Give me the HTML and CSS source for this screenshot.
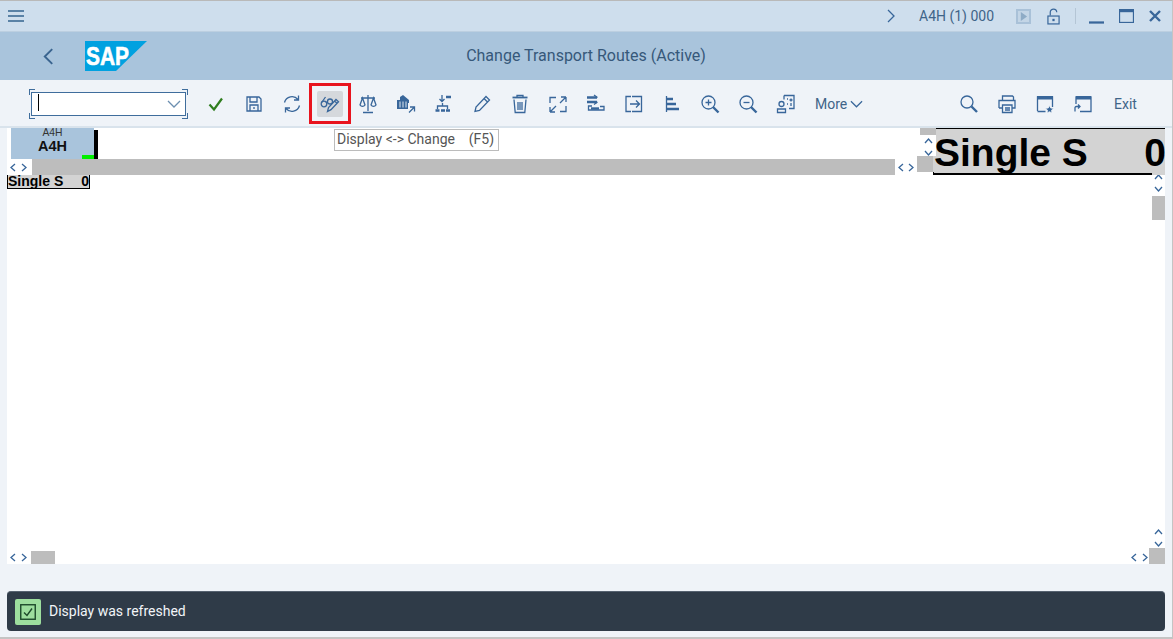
FILE: index.html
```html
<!DOCTYPE html>
<html lang="en">
<head>
<meta charset="utf-8">
<title>Change Transport Routes (Active)</title>
<link rel="stylesheet" href="styles.css">
</head>
<body>
<div class="shell">
  <header class="sysbar">
    <svg class="ico menu" viewBox="0 0 16 12"><path d="M0 1h16M0 6h16M0 11h16"/></svg>
    <div class="sys-right">
      <svg class="ico sys-chev" viewBox="0 0 8 14"><path d="M1 1l6 6-6 6"/></svg>
      <span class="sys-text">A4H (1) 000</span>
      <span class="play"><svg viewBox="0 0 10 10"><path d="M2 0l7 5-7 5z"/></svg></span>
      <svg class="ico lock" viewBox="0 0 14 18"><path d="M3.500 8V4.500a3.500 3.500 0 0 1 7 0"/><rect x="1" y="8.500" width="12" height="8.500"/><path class="fat" d="M7 11.500v2.500"/></svg>
      <span class="sep"></span>
      <svg class="ico win-min" viewBox="0 0 16 3"><path class="fat" d="M0 1.500h16"/></svg>
      <svg class="ico win-max" viewBox="0 0 15 14"><rect x=".5" y=".5" width="14" height="13"/><path class="fat" d="M0 2h15"/></svg>
      <svg class="ico win-close" viewBox="0 0 12 12"><path class="fat" d="M1 1l10 10M11 1L1 11"/></svg>
    </div>
  </header>

  <div class="titlebar">
    <svg class="ico back" viewBox="0 0 10 16"><path class="semi" d="M8.500 1L1.500 8l7 7"/></svg>
    <svg class="logo" viewBox="0 0 62 30"><path class="logo-bg" d="M0 0h62L31 30H0z"/><text class="logo-text" x="1" y="24" textLength="43" lengthAdjust="spacingAndGlyphs">SAP</text></svg>
    <h1 class="title">Change Transport Routes (Active)</h1>
  </div>

  <div class="toolbar">
    <div class="cmd">
      <span class="caret"></span>
      <svg class="ico cmd-chev" viewBox="0 0 14 8"><path d="M1 1l6 6 6-6"/></svg>
    </div>
    <div class="tools">
      <span class="tool"><svg viewBox="0 0 20 20"><path class="check" d="M3.500 10.500l4.500 5L16 4.500"/></svg></span>
      <span class="tool"><svg class="ico" viewBox="0 0 20 20"><path d="M3 3h12l2 2v12H3z"/><path d="M6 3v5h7V3M6 17v-6h8v6M10 13v2"/></svg></span>
      <span class="tool"><svg class="ico" viewBox="0 0 20 20"><path d="M2.500 8.500A7.800 7.800 0 0 1 16 5.500M17.500 11.500A7.800 7.800 0 0 1 4 14.500M16.500 1.500v4.500h-4.500M3.500 18.500v-4.500h4.500"/></svg></span>
      <span class="tool tool-active"><svg class="ico" viewBox="0 0 20 20"><circle cx="4" cy="10" r="2.800"/><circle cx="10" cy="7.500" r="2.500"/><path d="M2 8l3.500-5M6.600 9l1-.6M7.500 17.500l1-4 7.500-8 2.500 2.200-7.500 8zM14.500 7l2.500 2.200"/></svg></span>
      <span class="tool"><svg class="ico" viewBox="0 0 20 20"><path d="M10 1v16M5 18.500h10M3 4h14M4.500 4L2 11a3 3 0 0 0 5 0L4.500 4zM15.500 4L13 11a3 3 0 0 0 5 0l-2.500-7z"/></svg></span>
      <span class="tool"><svg class="ico" viewBox="0 0 20 20"><path class="block" d="M7 1l6 5v3h-1v6H1V6h3V3z"/><path class="lite" d="M4 7.500v6M7 7.500v6M10 7.500v6"/><path d="M13 18.500l5.500-5.500M14 13h4.500v4.500"/></svg></span>
      <span class="tool"><svg class="ico" viewBox="0 0 20 20"><path d="M8 1v6M5.500 5l2.500 2.500L10.500 5M8.500 9v3M3.500 15v-3h10v3"/><path class="fat" d="M12 3h5M1.500 16.500h4M7 16.500h4M12 16.500h4"/></svg></span>
      <span class="tool"><svg class="ico" viewBox="0 0 20 20"><path d="M3 17.500l1-4.500L14 2.500 17.500 6l-10 10.500zM12 4.500L15.500 8"/></svg></span>
      <span class="tool"><svg class="ico" viewBox="0 0 20 20"><path class="semi" d="M2.500 3.500h15"/><path d="M7 3.500V1.500h6v2M4 5.500l1.200 13h9.600L16 5.500M8 8v8M10 8v8M12 8v8"/></svg></span>
      <span class="tool"><svg class="ico" viewBox="0 0 20 20"><path d="M2 9V3.500h6M12 17.500h6V12M18 3h-5M18 3v5M18 3l-6 6M2 18h5M2 18v-5M2 18l6-6"/></svg></span>
      <span class="tool"><svg class="ico" viewBox="0 0 20 20"><path class="fat" d="M1 3.500h10M1 8h10"/><path d="M8 1l3.500 2.500M8 10.500L11.500 8M6 12H2.500v4H18v-3.500h-4"/><path class="fat" d="M5 14.500h8"/></svg></span>
      <span class="tool"><svg class="ico" viewBox="0 0 20 20"><path d="M7 2.500H2v15h5M8 2.500h9.500v15H8M6 10h9M12 6.500l3.500 3.500-3.500 3.500"/></svg></span>
      <span class="tool"><svg class="ico" viewBox="0 0 20 20"><path d="M4.500 2v16"/><path class="fat" d="M5 5h6M5 10h9M5 15h12"/></svg></span>
      <span class="tool"><svg class="ico" viewBox="0 0 20 20"><circle cx="8.500" cy="8.500" r="6.500"/><path d="M8.500 5.500v6M5.500 8.500h6"/><path class="fat" d="M13 13l5.500 5.500"/></svg></span>
      <span class="tool"><svg class="ico" viewBox="0 0 20 20"><circle cx="8.500" cy="8.500" r="6.500"/><path d="M5.500 8.500h6"/><path class="fat" d="M13 13l5.500 5.500"/></svg></span>
      <span class="tool"><svg class="ico" viewBox="0 0 20 20"><path d="M8 1.500h10v13h-5M8 1.500v4M11 5h1M15 4.500v3M13.500 6h3M11 10h1M15 9v3"/><circle cx="5.500" cy="10" r="2.500"/><path d="M1.500 18.500V15h8v3.500z"/></svg></span>
      <span class="more">More<svg class="ico more-chev" viewBox="0 0 14 8"><path d="M1 1l6 6 6-6"/></svg></span>
    </div>
    <div class="tools-right">
      <span class="tool"><svg class="ico" viewBox="0 0 20 20"><circle cx="8" cy="8" r="6"/><path class="fat" d="M12.500 12.500l5.500 5.500"/></svg></span>
      <span class="tool"><svg class="ico" viewBox="0 0 20 20"><path d="M5.500 6V2h10l1 1v3M2 14V6.500h16V14h-2.500M5.500 14H2M5.500 11h9.500v7.500H5.500zM8 14h5M8 16h5"/></svg></span>
      <span class="tool"><svg class="ico" viewBox="0 0 20 20"><path d="M2.500 17V3h15v10M2.500 17.500h8"/><path class="band" d="M2 2h16v3.500H2z"/><path class="star" d="M14.500 11.500l1.200 2.500 2.800.3-2 1.900.5 2.800-2.500-1.300-2.500 1.300.5-2.800-2-1.900 2.800-.3z"/></svg></span>
      <span class="tool"><svg class="ico" viewBox="0 0 20 20"><path d="M3 10V3h15v14.500H7"/><path class="band" d="M3 2h15v3.500H3z"/><path d="M6.500 12.500H3.500a1.500 1.500 0 0 0-1.500 2v3M5 10.500l2 2-2 2"/></svg></span>
      <span class="exit">Exit</span>
    </div>
  </div>

  <main class="canvas">
    <div class="top-row">
      <div class="pane">
        <div class="pane-body">
          <div class="tile"><span class="tile-sm">A4H</span><span class="tile-lg">A4H</span><i class="tile-flag"></i></div>
          <i class="tile-bar"></i>
          <div class="vs-mini">
            <i class="grey vs-mini-thumb"></i>
            <svg class="ico chev" viewBox="0 0 9 6"><path d="M1 5l3.500-4L8 5"/></svg>
            <svg class="ico chev" viewBox="0 0 9 6"><path d="M1 1l3.500 4L8 1"/></svg>
          </div>
        </div>
        <div class="hs">
          <span class="arrows"><svg class="ico chev-h" viewBox="0 0 6 9"><path d="M5 1L1 4.500 5 8"/></svg><svg class="ico chev-h" viewBox="0 0 6 9"><path d="M1 1l4 3.500L1 8"/></svg></span>
          <i class="grey hs-track"></i>
          <span class="arrows arrows-mid"><svg class="ico chev-h" viewBox="0 0 6 9"><path d="M5 1L1 4.500 5 8"/></svg><svg class="ico chev-h" viewBox="0 0 6 9"><path d="M1 1l4 3.500L1 8"/></svg></span>
          <i class="grey hs-corner"></i>
        </div>
      </div>
      <div class="big-cell"><span class="big-label">Single S</span><span class="big-zero">0</span></div>
    </div>
    <div class="lower">
      <div class="lower-main"><div class="small-cell"><span>Single S</span><span>0</span></div></div>
      <div class="vs">
        <svg class="ico chev" viewBox="0 0 9 6"><path d="M1 5l3.500-4L8 5"/></svg>
        <svg class="ico chev" viewBox="0 0 9 6"><path d="M1 1l3.500 4L8 1"/></svg>
        <i class="grey vs-thumb"></i>
        <span class="vs-end">
          <svg class="ico chev" viewBox="0 0 9 6"><path d="M1 5l3.500-4L8 5"/></svg>
          <svg class="ico chev" viewBox="0 0 9 6"><path d="M1 1l3.500 4L8 1"/></svg>
        </span>
      </div>
      <div class="hs-bottom">
        <span class="arrows"><svg class="ico chev-h" viewBox="0 0 6 9"><path d="M5 1L1 4.500 5 8"/></svg><svg class="ico chev-h" viewBox="0 0 6 9"><path d="M1 1l4 3.500L1 8"/></svg></span>
        <i class="grey hs-bottom-thumb"></i>
        <span class="arrows arrows-end"><svg class="ico chev-h" viewBox="0 0 6 9"><path d="M5 1L1 4.500 5 8"/></svg><svg class="ico chev-h" viewBox="0 0 6 9"><path d="M1 1l4 3.500L1 8"/></svg></span>
      </div>
      <i class="grey corner"></i>
    </div>
    <div class="tooltip">Display &lt;-&gt; Change&nbsp;&nbsp;&nbsp;&nbsp;(F5)</div>
  </main>

  <footer class="footer">
    <div class="message">
      <span class="msg-icon"><svg viewBox="0 0 16 16"><rect x=".75" y=".75" width="14.500" height="14.500"/><path d="M4 8.500l3 3 5-7"/></svg></span>
      <span class="msg-text">Display was refreshed</span>
    </div>
  </footer>
</div>
</body>
</html>
```

FILE: styles.css
```css
* { box-sizing: border-box; }
html, body { margin: 0; height: 100%; overflow: hidden; }
body { font-family: Roboto, "Open Sans", sans-serif; background: #eff3f8; color: #3f5f80; }
i { display: block; }

.shell {
  height: 639px;
  display: flex;
  flex-direction: column;
  border-top: 1px solid #b9b9b9;
  border-right: 1px solid #c4c4c4;
  border-bottom: 2px solid #c4c4c4;
}

.ico { fill: none; stroke: #38669a; stroke-width: 1.300; display: block; }
.ico .fat { stroke-width: 2.400; }
.ico .semi { stroke-width: 1.800; }
.ico .block { fill: #38669a; stroke: none; }
.ico .lite { stroke: #dfe8f1; stroke-width: 1; }
.ico .band { fill: #38669a; stroke: none; }
.ico .star { fill: #38669a; stroke: #eff3f8; stroke-width: .8; }

/* system bar */
.sysbar {
  height: 30px;
  flex: none;
  background: #cedeed;
  display: flex;
  align-items: center;
  padding-left: 8px;
  justify-content: space-between;
}
.menu { width: 16px; height: 12px; stroke-width: 1.700; stroke: #35648f; }
.sys-right { display: flex; align-items: center; padding-right: 11px; }
.sys-chev { width: 8px; height: 14px; margin-right: 24px; }
.sys-text { font-size: 14px; color: #3f6488; width: 97px; white-space: nowrap; }
.play {
  width: 15px; height: 15px;
  border: 2px solid #a9c1d8;
  background: #c3d5e6;
  display: flex; align-items: center; justify-content: center;
}
.play svg { width: 9px; height: 9px; fill: #8eabc6; }
.lock { width: 13px; height: 17px; margin-left: 16px; }
.sep { width: 1px; height: 16px; background: #b4c5d5; margin: 0 13px 0 15px; }
.win-min { width: 15px; height: 3px; margin-top: 12px; }
.win-max { width: 15px; height: 14px; margin-left: 15px; }
.win-close { width: 12px; height: 12px; margin-left: 15px; }

/* title bar */
.titlebar {
  height: 49px;
  flex: none;
  background: #a9c4dc;
  border-top: 1px solid #bccfe0;
  display: flex;
  align-items: center;
  position: relative;
  padding-left: 43px;
}
.back { width: 11px; height: 17px; stroke: #3a648f; }
.logo { width: 62px; height: 30px; margin-left: 31px; }
.logo-bg { fill: #00a1e0; }
.logo-text { font-family: "Liberation Sans", sans-serif; font-weight: 700; font-size: 26px; fill: #fff; stroke: #fff; stroke-width: .6; }
.title {
  position: absolute;
  left: 0; right: 0; top: 14px;
  margin: 0;
  text-align: center;
  font-size: 16px;
  line-height: 20px;
  font-weight: 400;
  color: #36587a;
}

/* toolbar */
.toolbar {
  height: 48px;
  flex: none;
  background: #eff3f8;
  border-bottom: 2px solid #d9e3ec;
  display: flex;
  align-items: center;
  padding: 2px 27px 0 31px;
}
.cmd {
  width: 155px; height: 24px;
  background: #fff;
  border: 1px solid #3f6d9c;
  position: relative;
  flex: none;
  display: flex; align-items: center; justify-content: flex-end;
  padding-right: 4px;
}
.cmd::before {
  content: "";
  position: absolute;
  inset: -4px -3px;
  background:
    linear-gradient(#3f6d9c,#3f6d9c) 0 0/6px 1px,
    linear-gradient(#3f6d9c,#3f6d9c) 0 0/1px 6px,
    linear-gradient(#3f6d9c,#3f6d9c) 100% 0/6px 1px,
    linear-gradient(#3f6d9c,#3f6d9c) 100% 0/1px 6px,
    linear-gradient(#3f6d9c,#3f6d9c) 0 100%/6px 1px,
    linear-gradient(#3f6d9c,#3f6d9c) 0 100%/1px 6px,
    linear-gradient(#3f6d9c,#3f6d9c) 100% 100%/6px 1px,
    linear-gradient(#3f6d9c,#3f6d9c) 100% 100%/1px 6px;
  background-repeat: no-repeat;
  pointer-events: none;
}
.caret { position: absolute; left: 6px; top: 1px; width: 1px; height: 17px; background: #000; }
.cmd-chev { width: 14px; height: 8px; stroke: #6c8fb0; }
.tools { display: flex; align-items: center; margin-left: 11px; flex: 1; }
.tools-right { display: flex; align-items: center; }
.tool {
  width: 38px; height: 26px;
  flex: none;
  display: flex; align-items: center; justify-content: center;
  position: relative;
}
.tool svg { width: 20px; height: 20px; }
.check { fill: none; stroke: #2f7d1e; stroke-width: 2.200; }
.tool-active::before {
  content: "";
  position: absolute;
  left: 6px; top: 0;
  width: 26px; height: 26px;
  background: #d5d8dc;
  border-radius: 2px;
}
.tool-active::after {
  content: "";
  position: absolute;
  left: -2px; top: -8px;
  width: 36px; height: 35px;
  border: 3px solid #e8141e;
}
.tool-active svg { position: relative; }
.more { display: flex; align-items: center; font-size: 14px; color: #3f6488; margin-left: 10px; }
.more-chev { width: 13px; height: 8px; margin-left: 3px; }
.exit { font-size: 14px; color: #3f6488; margin-left: 12px; width: 31px; }

/* canvas */
.canvas {
  width: 1158px;
  height: 436px;
  flex: none;
  margin-left: 7px;
  background: #fff;
  position: relative;
  display: flex;
  flex-direction: column;
}
.grey { background: #bdbdbd; }
.top-row { height: 47px; flex: none; display: flex; }
.pane { width: 926px; flex: none; display: flex; flex-direction: column; position: relative; }
.pane-body { height: 31px; flex: none; display: flex; align-items: flex-end; padding-left: 4px; position: relative; }
.tile {
  width: 83px; height: 31px;
  background: #a9c4dc;
  display: flex; flex-direction: column; align-items: center;
  position: relative;
}
.tile-sm { font: 400 10.300px/10px "Liberation Sans", sans-serif; color: #333; }
.tile-lg { font: 700 14.500px/16px "Liberation Sans", sans-serif; color: #111; }
.tile-flag { position: absolute; right: 0; bottom: 0; width: 12px; height: 4px; background: #00f000; }
.tile-bar { width: 4px; height: 29px; background: #000; }
.vs-mini {
  position: absolute;
  right: -3px; top: 0;
  z-index: 1;
  width: 16px; height: 28px;
  background: #fff;
  display: flex; flex-direction: column; align-items: center;
}
.vs-mini-thumb { width: 16px; height: 7px; margin-bottom: 3px; flex: none; }
.chev { width: 9px; height: 6px; flex: none; margin-bottom: 6px; }
.hs { height: 16px; flex: none; display: flex; align-items: stretch; position: relative; }
.arrows { display: flex; align-items: center; justify-content: space-between; width: 25px; padding: 0 5px 0 3px; flex: none; }
.chev-h { width: 6px; height: 9px; }
.hs-track { flex: 1; }
.arrows-mid { width: 22px; padding: 0 3px; }
.hs-corner { width: 16px; height: 16px; margin-top: -3px; }
.big-cell {
  flex: 1;
  min-width: 0;
  overflow: hidden;
  height: 47px;
  background: #d3d3d3;
  border-top: 1px solid #000;
  display: flex;
  justify-content: space-between;
  font: 700 39px/48px "Liberation Sans", sans-serif;
  color: #000;
  padding-left: 1px;
  white-space: nowrap;
  position: relative;
}
.big-cell::after { content: ""; position: absolute; left: 0; right: 13px; bottom: 0; height: 2px; background: #000; }
.big-cell::before { content: ""; position: absolute; left: 0; bottom: 0; width: 1px; height: 3px; background: #000; }
.big-label { position: relative; z-index: 2; }
.big-zero { margin-right: -1px; }

.lower {
  flex: 1;
  min-height: 0;
  display: grid;
  grid-template-columns: 1fr 16px;
  grid-template-rows: 1fr 16px;
}
.lower-main { min-height: 0; }
.small-cell {
  width: 83px; height: 14px;
  background: #d3d3d3;
  border: 1px solid #000;
  border-top: 0;
  display: flex;
  justify-content: space-between;
  font: 700 14px/12px "Liberation Sans", sans-serif;
  color: #000;
  white-space: nowrap;
}
.vs { display: flex; flex-direction: column; align-items: center; padding-left: 3px; }
.vs > .chev:first-child { margin-top: -1px; }
.vs-thumb { width: 13px; height: 24px; margin-top: -2px; flex: none; }
.vs-end { margin-top: auto; display: flex; flex-direction: column; align-items: center; }
.vs-end .chev:last-child { margin-bottom: 1px; }
.hs-bottom { display: flex; align-items: center; height: 13px; margin-top: 3px; }
.hs-bottom-thumb { width: 24px; height: 13px; margin-left: -1px; }
.arrows-end { margin-left: auto; padding-right: 1px; width: 21px; }
.corner { width: 16px; height: 16px; }

.tooltip {
  position: absolute;
  left: 327px; top: 1px;
  width: 165px; height: 22px;
  background: #fff;
  border: 1px solid #bcbcbc;
  font-size: 14px;
  line-height: 18px;
  padding-left: 2px;
  color: #555;
  white-space: nowrap;
}

/* footer */
.footer { flex: 1; padding: 27px 7px 0; }
.message {
  height: 40px;
  background: #2f3b48;
  border-top: 1px solid #566270;
  border-radius: 4px;
  display: flex;
  align-items: center;
  padding-left: 8px;
}
.msg-icon {
  width: 26px; height: 26px;
  background: #9dde9e;
  border-radius: 2px;
  display: flex; align-items: center; justify-content: center;
}
.msg-icon svg { width: 16px; height: 16px; fill: none; stroke: #1d4a2a; stroke-width: 1.400; }
.msg-text { margin-left: 8px; font-size: 14px; color: #f2f5f8; line-height: 20px; margin-top: -2px; }
```
